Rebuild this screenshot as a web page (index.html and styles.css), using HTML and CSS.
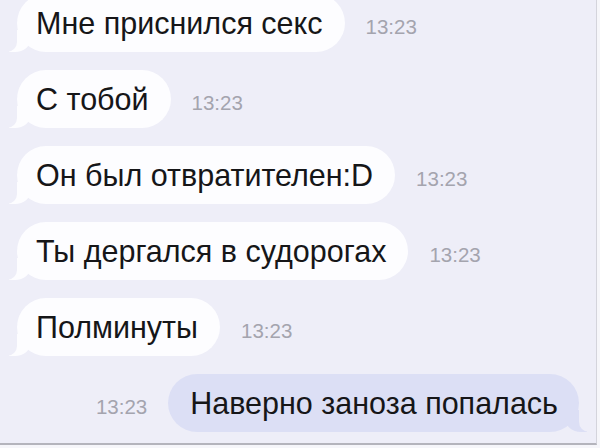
FILE: index.html
```html
<!DOCTYPE html>
<html lang="ru">
<head>
    <meta charset="UTF-8">
    <meta name="viewport" content="width=device-width, initial-scale=1.0">
    <!-- estilo -->
    <link rel="stylesheet" href="styles.css">
    <title>Сообщения</title>
</head>
<body>
    <!-- conversa -->
    <main class="chat">
        <div class="row">
            <div class="bubble in">Мне приснился секс</div>
            <span class="time">13:23</span>
        </div>
        <div class="row">
            <div class="bubble in">С тобой</div>
            <span class="time">13:23</span>
        </div>
        <div class="row">
            <div class="bubble in">Он был отвратителен:D</div>
            <span class="time">13:23</span>
        </div>
        <div class="row">
            <div class="bubble in">Ты дергался в судорогах</div>
            <span class="time">13:23</span>
        </div>
        <div class="row">
            <div class="bubble in">Полминуты</div>
            <span class="time">13:23</span>
        </div>
        <div class="row mine">
            <span class="time">13:23</span>
            <div class="bubble out">Наверно заноза попалась</div>
        </div>
    </main>
</body>
</html>
```

FILE: styles.css
```css
:root {
    --chat-bg: #eeeef8;
    --bubble-in: #fdfdff;
    --bubble-out: #dcdff5;
    --text-color: #161618;
    --time-color: #a4a4ae;
    --line-color: #d4d4dc;
}
body {
    margin: 0;
    overflow: hidden;
    background-color: #f6f6fa;
    font-family: "Liberation Sans", Arial, sans-serif;
}
.chat {
    width: 597px;
    height: 445px;
    box-sizing: border-box;
    background-color: var(--chat-bg);
    border-right: 1px solid var(--line-color);
    border-bottom: 2px solid #b4b4bc;
    overflow: hidden;
    display: flex;
    flex-direction: column;
    gap: 18px;
    padding: 0 17px 0 17px;
}
.row {
    display: flex;
    align-items: center;
    gap: 21px;
}
.row:first-child {
    margin-top: -6px;
}
.mine {
    justify-content: flex-end;
}
.bubble {
    position: relative;
    height: 58px;
    display: flex;
    align-items: center;
    padding: 0 22px 0 19px;
    border-radius: 29px;
    font-size: 30.5px;
    color: var(--text-color);
    white-space: nowrap;
}
.in {
    background-color: var(--bubble-in);
}
.out {
    background-color: var(--bubble-out);
    padding: 0 21px 0 22px;
}
/* rabinho do balao */
.bubble::before,
.bubble::after {
    content: "";
    position: absolute;
    bottom: 0;
    height: 22px;
}
.in::before {
    left: -8px;
    width: 22px;
    background-color: var(--bubble-in);
    border-bottom-right-radius: 16px 14px;
}
.in::after {
    left: -12px;
    width: 12px;
    background-color: var(--chat-bg);
    border-bottom-right-radius: 10px;
}
.out::before {
    right: -8px;
    width: 22px;
    background-color: var(--bubble-out);
    border-bottom-left-radius: 16px 14px;
}
.out::after {
    right: -12px;
    width: 12px;
    background-color: var(--chat-bg);
    border-bottom-left-radius: 10px;
}
.time {
    font-size: 20.5px;
    color: var(--time-color);
    padding-top: 7px;
}
```
